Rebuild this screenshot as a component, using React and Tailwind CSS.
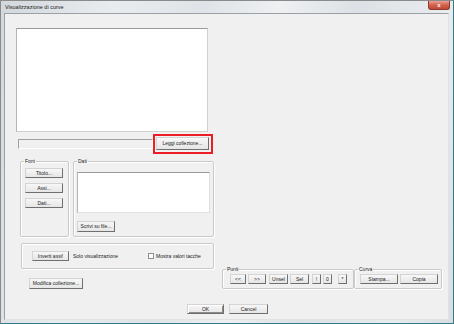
import React from 'react';

const Btn = ({ children, className = '' }) => (
  <div
    className={
      'flex items-center justify-center border border-[#d4d4d4] border-r-[#6f6f6f] border-b-[#6f6f6f] bg-[linear-gradient(#f7f7f7,#e6e6e6)] text-[5px] leading-none text-[#222] shrink-0 whitespace-nowrap ' +
      className
    }
  >
    {children}
  </div>
);

const Group = ({ label, className = '', children }) => (
  <fieldset className={'border border-[#c9c9c9] rounded-[2px] shadow-[inset_1px_1px_0_#fff,1px_1px_0_#fff] ' + className}>
    <legend className="ml-[3px] px-[1px] text-[5px] leading-[6px] text-[#222]">{label}</legend>
    {children}
  </fieldset>
);

export default function App() {
  return (
    <div className="w-[454px] h-[324px] flex flex-col border border-[#8a8a8a] border-r-[#2f7c86] border-b-[#2f7c86] bg-[linear-gradient(100deg,#d3d8dd_0%,#e9ecef_22%,#dfe3e7_40%,#eef0f2_55%,#dde1e5_70%,#e9ecef_88%,#d9dde1_100%)] font-['Liberation_Sans',Arial,sans-serif] overflow-hidden">
      {/* barra del titolo */}
      <div className="h-[12px] flex items-start justify-between">
        <span className="ml-[4px] mt-[4px] text-[5.5px] leading-none text-[#222]">Visualizzazione di curve</span>
        <div className="mr-[3px] w-[22px] h-[9px] rounded-b-[3px] border border-[#8a3a30] border-t-0 bg-[linear-gradient(#eaa395,#d4604c_50%,#c04a35)] flex items-center justify-center">
          <span className="text-[6px] leading-none font-bold text-white">x</span>
        </div>
      </div>

      {/* area client */}
      <div className="ml-[3px] mr-[4px] mb-[3px] flex-1 bg-[#f0f0f0] border border-[#9aa0a6] border-r-[#e0e3e6] border-b-[#e0e3e6] flex flex-col">
        <div className="flex">
          <div className="w-[209px] flex flex-col">
            <div className="ml-[11px] mt-[14px] w-[192px] h-[104px] bg-white border border-[#d0d0d0] border-t-[#9a9a9a] border-l-[#b5b5b5]" />

            <div className="mt-[2px] flex">
              <div className="ml-[13px] mt-[5px] w-[135px] h-[10px] border border-[#a0a0a0] border-r-white border-b-white" />
              <div className="w-[60px] h-[20px] border-2 border-[#ee1c25] pl-[1px] pt-[1px]">
                <Btn className="w-[53px] h-[13px]">Leggi collezione...</Btn>
              </div>
            </div>

            <div className="mt-[4px] ml-[15px] flex gap-[4px]">
              <Group label="Font" className="w-[49px] h-[79px]">
                <div className="mt-[4px] ml-[4px] flex flex-col gap-[5px]">
                  <Btn className="w-[38px] h-[10px]">Titolo...</Btn>
                  <Btn className="w-[38px] h-[10px]">Assi...</Btn>
                  <Btn className="w-[38px] h-[10px]">Dati...</Btn>
                </div>
              </Group>
              <Group label="Dati" className="w-[141px] h-[79px]">
                <div className="mt-[8px] ml-[3px] w-[133px] h-[41px] bg-white border border-[#e0e0e0] border-t-[#9a9a9a] border-l-[#b5b5b5]" />
                <Btn className="mt-[8px] ml-[3px] w-[38px] h-[11px]">Scrivi su file...</Btn>
              </Group>
            </div>

            <div className="ml-[16px] mt-[6px] w-[193px] h-[26px] border border-[#c9c9c9] rounded-[2px] shadow-[inset_1px_1px_0_#fff,1px_1px_0_#fff] flex items-center">
              <Btn className="ml-[10px] w-[37px] h-[10px]">Inverti assi!</Btn>
              <span className="ml-[4px] text-[5px] leading-none text-[#222] whitespace-nowrap">Solo visualizzazione</span>
              <div className="ml-[30px] w-[6px] h-[6px] border border-[#8e8f8f] bg-white shrink-0" />
              <span className="ml-[2px] text-[5px] leading-none text-[#222] whitespace-nowrap">Mostra valori tacche</span>
            </div>

            <Btn className="ml-[24px] mt-[9px] w-[54px] h-[11px]">Modifica collezione...</Btn>
          </div>

          <div className="ml-[8px] mt-[252px] flex">
            <Group label="Punti" className="w-[132px] h-[23px]">
              <div className="mt-[2px] ml-[7px] flex">
                <Btn className="w-[16px] h-[10px]">&lt;&lt;</Btn>
                <Btn className="ml-[2px] w-[18px] h-[10px]">&gt;&gt;</Btn>
                <Btn className="ml-[3px] w-[19px] h-[10px]">Unsel</Btn>
                <Btn className="ml-[2px] w-[19px] h-[10px]">Sel</Btn>
                <Btn className="ml-[3px] w-[9px] h-[10px]">!</Btn>
                <Btn className="ml-[2px] w-[9px] h-[10px]">0</Btn>
                <Btn className="ml-[6px] w-[9px] h-[10px]">*</Btn>
              </div>
            </Group>
            <Group label="Curva" className="w-[88px] h-[23px]">
              <div className="mt-[2px] ml-[5px] flex gap-[2px]">
                <Btn className="w-[38px] h-[10px]">Stampa...</Btn>
                <Btn className="w-[38px] h-[10px]">Copia</Btn>
              </div>
            </Group>
          </div>
        </div>

        <div className="mt-[15px] ml-[182px] flex gap-[5px]">
          <Btn className="w-[37px] h-[10px] border-[#3c3c3c] border-r-[#3c3c3c] border-b-[#3c3c3c] shadow-[inset_1px_1px_0_#fff,inset_-1px_-1px_0_#8a8a8a]">OK</Btn>
          <Btn className="w-[39px] h-[10px]">Cancel</Btn>
        </div>
      </div>
    </div>
  );
}
